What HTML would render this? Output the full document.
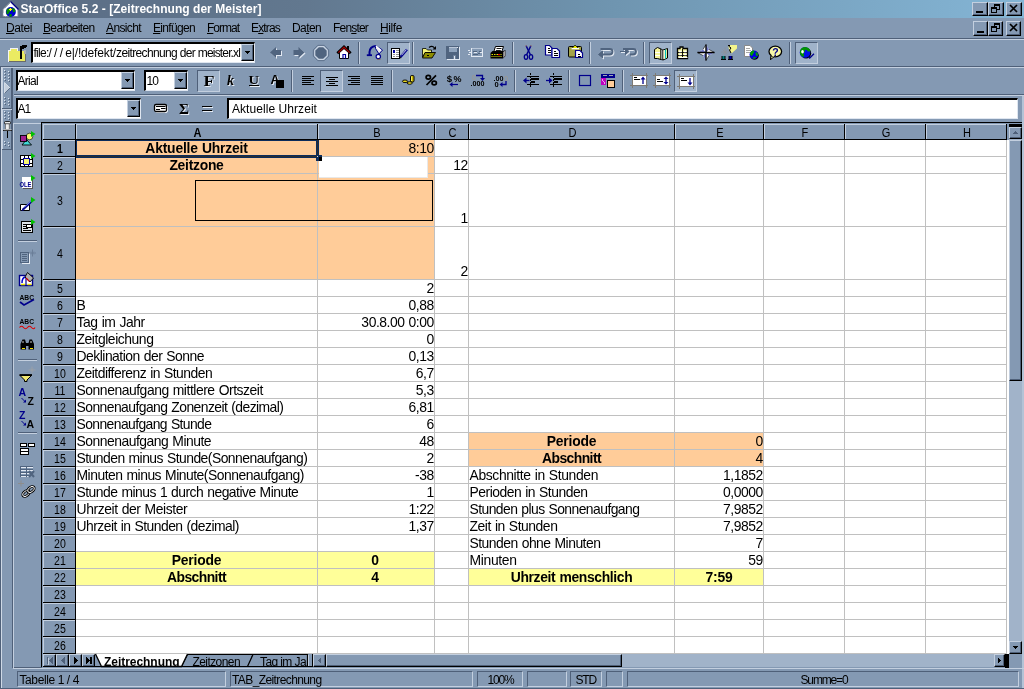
<!DOCTYPE html>
<html lang="de"><head><meta charset="utf-8"><title>StarOffice 5.2 - [Zeitrechnung der Meister]</title>
<style>
html,body{margin:0;padding:0}
body{width:1024px;height:689px;position:relative;overflow:hidden;background:#8499b3;font-family:"Liberation Sans",sans-serif;font-size:11px;color:#000}
div,span{position:absolute;box-sizing:border-box;white-space:nowrap}
svg{position:absolute;overflow:visible}
.t{font-size:12px;line-height:14px}
.c{font-size:13.9px;line-height:16px;height:16px;letter-spacing:-0.55px;word-spacing:0.6px}
.c.b{font-size:13.9px;letter-spacing:-0.25px}
.b{font-weight:bold}
.hl{background:#c3cfdf}.sh{background:#4f6079}.bk{background:#000}
.g{background:#c0c0c0}
.hc{font-size:12px;line-height:14px;text-align:center}
.inp{background:#fff;border-style:solid;border-width:2px 1px 1px 2px;border-color:#000 #dfe6f0 #dfe6f0 #000}
.btn{background:#8499b3;border:1px solid;border-color:#c3cfdf #000 #000 #c3cfdf}
u{text-decoration:underline}
.i{position:static}
</style></head>
<body>
<div id="app" style="left:0;top:0;width:1024px;height:689px;will-change:transform">
<div class="" style="left:0px;top:0px;width:1024px;height:18px;background:linear-gradient(90deg,#5a6c84 0%,#62788f 30%,#6f95b0 60%,#84b5d5 100%)"></div>
<span style="left:20.5px;top:2px;font-size:12px;line-height:14px;letter-spacing:0.038px;font-weight:bold;color:#fff;">StarOffice 5.2 - [Zeitrechnung der Meister]</span>
<span style="left:6px;top:21px;font-size:12px;line-height:14px;letter-spacing:-0.403px;"><u>D</u>atei</span>
<span style="left:43px;top:21px;font-size:12px;line-height:14px;letter-spacing:-0.654px;"><u>B</u>earbeiten</span>
<span style="left:106px;top:21px;font-size:12px;line-height:14px;letter-spacing:-0.622px;"><u>A</u>nsicht</span>
<span style="left:153px;top:21px;font-size:12px;line-height:14px;letter-spacing:-0.672px;"><u>E</u>inf&uuml;gen</span>
<span style="left:207px;top:21px;font-size:12px;line-height:14px;letter-spacing:-1.001px;"><u>F</u>ormat</span>
<span style="left:251px;top:21px;font-size:12px;line-height:14px;letter-spacing:-0.835px;">E<u>x</u>tras</span>
<span style="left:292px;top:21px;font-size:12px;line-height:14px;letter-spacing:-0.604px;">Da<u>t</u>en</span>
<span style="left:333px;top:21px;font-size:12px;line-height:14px;letter-spacing:-0.812px;">Fen<u>s</u>ter</span>
<span style="left:380px;top:21px;font-size:12px;line-height:14px;letter-spacing:-0.401px;"><u>H</u>ilfe</span>
<div class="sh" style="left:0px;top:38px;width:1024px;height:1px;"></div>
<div class="hl" style="left:0px;top:39px;width:1024px;height:1px;"></div>
<div class="sh" style="left:0px;top:66px;width:1024px;height:1px;"></div>
<div class="hl" style="left:0px;top:67px;width:1024px;height:1px;"></div>
<div class="sh" style="left:14px;top:94px;width:1010px;height:1px;"></div>
<div class="hl" style="left:14px;top:95px;width:1010px;height:1px;"></div>
<div class="btn" style="left:972px;top:2px;width:16px;height:14px;border-color:#c3cfdf #000 #000 #c3cfdf;box-shadow:inset -1px -1px 0 #4f6079"></div>
<div class="bk" style="left:976px;top:11px;width:7px;height:2px;"></div>
<div class="btn" style="left:988px;top:2px;width:16px;height:14px;border-color:#c3cfdf #000 #000 #c3cfdf;box-shadow:inset -1px -1px 0 #4f6079"></div>
<div class="" style="left:994px;top:4px;width:6px;height:6px;border:1px solid #000;border-top-width:2px"></div>
<div class="" style="left:991px;top:7px;width:6px;height:6px;border:1px solid #000;border-top-width:2px;background:#8499b3"></div>
<div class="btn" style="left:1006px;top:2px;width:16px;height:14px;border-color:#c3cfdf #000 #000 #c3cfdf;box-shadow:inset -1px -1px 0 #4f6079"></div>
<svg style="left:1009px;top:4px" width="10" height="9"><path d="M1 1 L8 8 M8 1 L1 8" stroke="#000" stroke-width="1.7" fill="none"/></svg>
<div class="btn" style="left:973px;top:21px;width:15px;height:15px;border-color:#c3cfdf #000 #000 #c3cfdf;box-shadow:inset -1px -1px 0 #4f6079"></div>
<div class="bk" style="left:977px;top:31px;width:7px;height:2px;"></div>
<div class="btn" style="left:988px;top:21px;width:15px;height:15px;border-color:#c3cfdf #000 #000 #c3cfdf;box-shadow:inset -1px -1px 0 #4f6079"></div>
<div class="" style="left:994px;top:23px;width:6px;height:6px;border:1px solid #000;border-top-width:2px"></div>
<div class="" style="left:991px;top:26px;width:6px;height:6px;border:1px solid #000;border-top-width:2px;background:#8499b3"></div>
<div class="btn" style="left:1006px;top:21px;width:15px;height:15px;border-color:#c3cfdf #000 #000 #c3cfdf;box-shadow:inset -1px -1px 0 #4f6079"></div>
<svg style="left:1009px;top:23px" width="10" height="9"><path d="M1 1 L8 8 M8 1 L1 8" stroke="#000" stroke-width="1.7" fill="none"/></svg>
<div class="inp" style="left:31px;top:42px;width:224px;height:21px;"></div>
<span style="left:33.5px;top:45.5px;font-size:12px;line-height:14px;white-space:pre"><span class="i" style="letter-spacing:-0.735px">file:</span><span class="i" style="letter-spacing:2.283px">///</span><span class="i" style="letter-spacing:-0.202px">e|/!</span><span class="i" style="letter-spacing:-0.146px">defekt/</span><span class="i" style="letter-spacing:-0.638px">zeitrechnung </span><span class="i" style="letter-spacing:-0.669px">der </span><span class="i" style="letter-spacing:-0.838px">meister.xl</span></span>
<div class="btn" style="left:241px;top:44px;width:13px;height:17px;box-shadow:inset -1px -1px 0 #4f6079"></div>
<div class="bk" style="left:245px;top:51px;width:5px;height:1px;"></div>
<div class="bk" style="left:246px;top:52px;width:3px;height:1px;"></div>
<div class="bk" style="left:247px;top:53px;width:1px;height:1px;"></div>
<div class="sh" style="left:358px;top:42px;width:1px;height:22px;"></div>
<div class="hl" style="left:359px;top:42px;width:1px;height:22px;"></div>
<div class="sh" style="left:412px;top:42px;width:1px;height:22px;"></div>
<div class="hl" style="left:413px;top:42px;width:1px;height:22px;"></div>
<div class="sh" style="left:512px;top:42px;width:1px;height:22px;"></div>
<div class="hl" style="left:513px;top:42px;width:1px;height:22px;"></div>
<div class="sh" style="left:589px;top:42px;width:1px;height:22px;"></div>
<div class="hl" style="left:590px;top:42px;width:1px;height:22px;"></div>
<div class="sh" style="left:643px;top:42px;width:1px;height:22px;"></div>
<div class="hl" style="left:644px;top:42px;width:1px;height:22px;"></div>
<div class="sh" style="left:789px;top:42px;width:1px;height:22px;"></div>
<div class="hl" style="left:790px;top:42px;width:1px;height:22px;"></div>
<div class="" style="left:387px;top:42px;width:23px;height:22px;background:#a0b3ca;border:1px solid;border-color:#4f6079 #c3cfdf #c3cfdf #4f6079"></div>
<div class="" style="left:649px;top:42px;width:23px;height:22px;background:#a0b3ca;border:1px solid;border-color:#4f6079 #c3cfdf #c3cfdf #4f6079"></div>
<div class="" style="left:795px;top:42px;width:23px;height:22px;background:#a0b3ca;border:1px solid;border-color:#4f6079 #c3cfdf #c3cfdf #4f6079"></div>
<div class="inp" style="left:16px;top:70px;width:119px;height:21px;"></div>
<span style="left:17.5px;top:73.5px;font-size:12px;line-height:14px;letter-spacing:-0.701px;">Arial</span>
<div class="btn" style="left:121px;top:72px;width:13px;height:17px;box-shadow:inset -1px -1px 0 #4f6079"></div>
<div class="bk" style="left:125px;top:79px;width:5px;height:1px;"></div>
<div class="bk" style="left:126px;top:80px;width:3px;height:1px;"></div>
<div class="bk" style="left:127px;top:81px;width:1px;height:1px;"></div>
<div class="inp" style="left:144px;top:70px;width:44px;height:21px;"></div>
<span style="left:146.5px;top:73.5px;font-size:12px;line-height:14px;letter-spacing:-0.924px;">10</span>
<div class="btn" style="left:174px;top:72px;width:13px;height:17px;box-shadow:inset -1px -1px 0 #4f6079"></div>
<div class="bk" style="left:178px;top:79px;width:5px;height:1px;"></div>
<div class="bk" style="left:179px;top:80px;width:3px;height:1px;"></div>
<div class="bk" style="left:180px;top:81px;width:1px;height:1px;"></div>
<div class="" style="left:197px;top:70px;width:23px;height:22px;background:#a0b3ca;border:1px solid;border-color:#4f6079 #c3cfdf #c3cfdf #4f6079"></div>
<div class="" style="left:320px;top:70px;width:23px;height:22px;background:#a0b3ca;border:1px solid;border-color:#4f6079 #c3cfdf #c3cfdf #4f6079"></div>
<div class="" style="left:674px;top:70px;width:23px;height:22px;background:#a0b3ca;border:1px solid;border-color:#4f6079 #c3cfdf #c3cfdf #4f6079"></div>
<div class="sh" style="left:291px;top:70px;width:1px;height:22px;"></div>
<div class="hl" style="left:292px;top:70px;width:1px;height:22px;"></div>
<div class="sh" style="left:391px;top:70px;width:1px;height:22px;"></div>
<div class="hl" style="left:392px;top:70px;width:1px;height:22px;"></div>
<div class="sh" style="left:514px;top:70px;width:1px;height:22px;"></div>
<div class="hl" style="left:515px;top:70px;width:1px;height:22px;"></div>
<div class="sh" style="left:568px;top:70px;width:1px;height:22px;"></div>
<div class="hl" style="left:569px;top:70px;width:1px;height:22px;"></div>
<div class="sh" style="left:622px;top:70px;width:1px;height:22px;"></div>
<div class="hl" style="left:623px;top:70px;width:1px;height:22px;"></div>
<div class="inp" style="left:16px;top:98px;width:125px;height:21px;"></div>
<span style="left:17.5px;top:101.5px;font-size:12px;line-height:14px;letter-spacing:-1.089px;">A1</span>
<div class="btn" style="left:127px;top:100px;width:13px;height:17px;box-shadow:inset -1px -1px 0 #4f6079"></div>
<div class="bk" style="left:131px;top:107px;width:5px;height:1px;"></div>
<div class="bk" style="left:132px;top:108px;width:3px;height:1px;"></div>
<div class="bk" style="left:133px;top:109px;width:1px;height:1px;"></div>
<div class="inp" style="left:227px;top:98px;width:791px;height:21px;"></div>
<span style="left:232px;top:102px;font-size:12px;line-height:14px;letter-spacing:0.060px;">Aktuelle Uhrzeit</span>
<div class="" style="left:76px;top:140px;width:933px;height:514px;background:#fff"></div>
<div class="" style="left:76px;top:140px;width:358px;height:139px;background:#ffcc99"></div>
<div class="" style="left:469px;top:433px;width:294px;height:33px;background:#ffcc99"></div>
<div class="" style="left:76px;top:552px;width:358px;height:33px;background:#ffff99"></div>
<div class="" style="left:469px;top:569px;width:294px;height:16px;background:#ffff99"></div>
<div class="g" style="left:317px;top:140px;width:1px;height:514px;"></div>
<div class="g" style="left:434px;top:140px;width:1px;height:514px;"></div>
<div class="g" style="left:468px;top:140px;width:1px;height:514px;"></div>
<div class="g" style="left:674px;top:140px;width:1px;height:514px;"></div>
<div class="g" style="left:763px;top:140px;width:1px;height:514px;"></div>
<div class="g" style="left:844px;top:140px;width:1px;height:514px;"></div>
<div class="g" style="left:925px;top:140px;width:1px;height:514px;"></div>
<div class="g" style="left:1006px;top:140px;width:1px;height:514px;"></div>
<div class="g" style="left:76px;top:156px;width:931px;height:1px;"></div>
<div class="g" style="left:76px;top:173px;width:931px;height:1px;"></div>
<div class="g" style="left:76px;top:226px;width:931px;height:1px;"></div>
<div class="g" style="left:76px;top:279px;width:931px;height:1px;"></div>
<div class="g" style="left:76px;top:296px;width:931px;height:1px;"></div>
<div class="g" style="left:76px;top:313px;width:931px;height:1px;"></div>
<div class="g" style="left:76px;top:330px;width:931px;height:1px;"></div>
<div class="g" style="left:76px;top:347px;width:931px;height:1px;"></div>
<div class="g" style="left:76px;top:364px;width:931px;height:1px;"></div>
<div class="g" style="left:76px;top:381px;width:931px;height:1px;"></div>
<div class="g" style="left:76px;top:398px;width:931px;height:1px;"></div>
<div class="g" style="left:76px;top:415px;width:931px;height:1px;"></div>
<div class="g" style="left:76px;top:432px;width:931px;height:1px;"></div>
<div class="g" style="left:76px;top:449px;width:931px;height:1px;"></div>
<div class="g" style="left:76px;top:466px;width:931px;height:1px;"></div>
<div class="g" style="left:76px;top:483px;width:931px;height:1px;"></div>
<div class="g" style="left:76px;top:500px;width:931px;height:1px;"></div>
<div class="g" style="left:76px;top:517px;width:931px;height:1px;"></div>
<div class="g" style="left:76px;top:534px;width:931px;height:1px;"></div>
<div class="g" style="left:76px;top:551px;width:931px;height:1px;"></div>
<div class="g" style="left:76px;top:568px;width:931px;height:1px;"></div>
<div class="g" style="left:76px;top:585px;width:931px;height:1px;"></div>
<div class="g" style="left:76px;top:602px;width:931px;height:1px;"></div>
<div class="g" style="left:76px;top:619px;width:931px;height:1px;"></div>
<div class="g" style="left:76px;top:636px;width:931px;height:1px;"></div>
<div class="g" style="left:76px;top:653px;width:931px;height:1px;"></div>
<div class="bk" style="left:41px;top:122px;width:981px;height:1px;"></div>
<div class="bk" style="left:41px;top:122px;width:1px;height:546px;"></div>
<div class="" style="left:43px;top:124px;width:964px;height:15px;background:#8499b3"></div>
<div class="bk" style="left:43px;top:139px;width:964px;height:1px;"></div>
<div class="" style="left:43px;top:140px;width:32px;height:514px;background:#8499b3"></div>
<div class="bk" style="left:75px;top:124px;width:1px;height:530px;"></div>
<div class="hc" style="left:43px;top:124px;width:32px;height:15px;border-top:1px solid #c3cfdf;border-left:1px solid #c3cfdf;"><span style="left:0px;width:32px;top:0px;text-align:center;transform:scaleX(1)"></span></div>
<div class="hc b" style="left:76px;top:124px;width:241px;height:15px;border-top:1px solid #c3cfdf;border-left:1px solid #c3cfdf;"><span style="left:0px;width:241px;top:1px;text-align:center;transform:scaleX(0.92)">A</span></div>
<div class="bk" style="left:317px;top:124px;width:1px;height:15px;"></div>
<div class="hc" style="left:318px;top:124px;width:116px;height:15px;border-top:1px solid #c3cfdf;border-left:1px solid #c3cfdf;"><span style="left:0px;width:116px;top:1px;text-align:center;transform:scaleX(0.92)">B</span></div>
<div class="bk" style="left:434px;top:124px;width:1px;height:15px;"></div>
<div class="hc" style="left:435px;top:124px;width:33px;height:15px;border-top:1px solid #c3cfdf;border-left:1px solid #c3cfdf;"><span style="left:0px;width:33px;top:1px;text-align:center;transform:scaleX(0.92)">C</span></div>
<div class="bk" style="left:468px;top:124px;width:1px;height:15px;"></div>
<div class="hc" style="left:469px;top:124px;width:205px;height:15px;border-top:1px solid #c3cfdf;border-left:1px solid #c3cfdf;"><span style="left:0px;width:205px;top:1px;text-align:center;transform:scaleX(0.92)">D</span></div>
<div class="bk" style="left:674px;top:124px;width:1px;height:15px;"></div>
<div class="hc" style="left:675px;top:124px;width:88px;height:15px;border-top:1px solid #c3cfdf;border-left:1px solid #c3cfdf;"><span style="left:0px;width:88px;top:1px;text-align:center;transform:scaleX(0.92)">E</span></div>
<div class="bk" style="left:763px;top:124px;width:1px;height:15px;"></div>
<div class="hc" style="left:764px;top:124px;width:80px;height:15px;border-top:1px solid #c3cfdf;border-left:1px solid #c3cfdf;"><span style="left:0px;width:80px;top:1px;text-align:center;transform:scaleX(0.92)">F</span></div>
<div class="bk" style="left:844px;top:124px;width:1px;height:15px;"></div>
<div class="hc" style="left:845px;top:124px;width:80px;height:15px;border-top:1px solid #c3cfdf;border-left:1px solid #c3cfdf;"><span style="left:0px;width:80px;top:1px;text-align:center;transform:scaleX(0.92)">G</span></div>
<div class="bk" style="left:925px;top:124px;width:1px;height:15px;"></div>
<div class="hc" style="left:926px;top:124px;width:80px;height:15px;border-top:1px solid #c3cfdf;border-left:1px solid #c3cfdf;"><span style="left:0px;width:80px;top:1px;text-align:center;transform:scaleX(0.92)">H</span></div>
<div class="bk" style="left:1006px;top:124px;width:1px;height:15px;"></div>
<div class="hc b" style="left:43px;top:140px;width:32px;height:16px;border-top:1px solid #c3cfdf;border-left:1px solid #c3cfdf;"><span style="left:0px;width:32px;top:0.5px;text-align:center;transform:scaleX(0.88)">1</span></div>
<div class="bk" style="left:43px;top:156px;width:32px;height:1px;"></div>
<div class="hc" style="left:43px;top:157px;width:32px;height:16px;border-top:1px solid #c3cfdf;border-left:1px solid #c3cfdf;"><span style="left:0px;width:32px;top:0.5px;text-align:center;transform:scaleX(0.88)">2</span></div>
<div class="bk" style="left:43px;top:173px;width:32px;height:1px;"></div>
<div class="hc" style="left:43px;top:174px;width:32px;height:52px;border-top:1px solid #c3cfdf;border-left:1px solid #c3cfdf;"><span style="left:0px;width:32px;top:18.5px;text-align:center;transform:scaleX(0.88)">3</span></div>
<div class="bk" style="left:43px;top:226px;width:32px;height:1px;"></div>
<div class="hc" style="left:43px;top:227px;width:32px;height:52px;border-top:1px solid #c3cfdf;border-left:1px solid #c3cfdf;"><span style="left:0px;width:32px;top:18.5px;text-align:center;transform:scaleX(0.88)">4</span></div>
<div class="bk" style="left:43px;top:279px;width:32px;height:1px;"></div>
<div class="hc" style="left:43px;top:280px;width:32px;height:16px;border-top:1px solid #c3cfdf;border-left:1px solid #c3cfdf;"><span style="left:0px;width:32px;top:0.5px;text-align:center;transform:scaleX(0.88)">5</span></div>
<div class="bk" style="left:43px;top:296px;width:32px;height:1px;"></div>
<div class="hc" style="left:43px;top:297px;width:32px;height:16px;border-top:1px solid #c3cfdf;border-left:1px solid #c3cfdf;"><span style="left:0px;width:32px;top:0.5px;text-align:center;transform:scaleX(0.88)">6</span></div>
<div class="bk" style="left:43px;top:313px;width:32px;height:1px;"></div>
<div class="hc" style="left:43px;top:314px;width:32px;height:16px;border-top:1px solid #c3cfdf;border-left:1px solid #c3cfdf;"><span style="left:0px;width:32px;top:0.5px;text-align:center;transform:scaleX(0.88)">7</span></div>
<div class="bk" style="left:43px;top:330px;width:32px;height:1px;"></div>
<div class="hc" style="left:43px;top:331px;width:32px;height:16px;border-top:1px solid #c3cfdf;border-left:1px solid #c3cfdf;"><span style="left:0px;width:32px;top:0.5px;text-align:center;transform:scaleX(0.88)">8</span></div>
<div class="bk" style="left:43px;top:347px;width:32px;height:1px;"></div>
<div class="hc" style="left:43px;top:348px;width:32px;height:16px;border-top:1px solid #c3cfdf;border-left:1px solid #c3cfdf;"><span style="left:0px;width:32px;top:0.5px;text-align:center;transform:scaleX(0.88)">9</span></div>
<div class="bk" style="left:43px;top:364px;width:32px;height:1px;"></div>
<div class="hc" style="left:43px;top:365px;width:32px;height:16px;border-top:1px solid #c3cfdf;border-left:1px solid #c3cfdf;"><span style="left:0px;width:32px;top:0.5px;text-align:center;transform:scaleX(0.88)">10</span></div>
<div class="bk" style="left:43px;top:381px;width:32px;height:1px;"></div>
<div class="hc" style="left:43px;top:382px;width:32px;height:16px;border-top:1px solid #c3cfdf;border-left:1px solid #c3cfdf;"><span style="left:0px;width:32px;top:0.5px;text-align:center;transform:scaleX(0.88)">11</span></div>
<div class="bk" style="left:43px;top:398px;width:32px;height:1px;"></div>
<div class="hc" style="left:43px;top:399px;width:32px;height:16px;border-top:1px solid #c3cfdf;border-left:1px solid #c3cfdf;"><span style="left:0px;width:32px;top:0.5px;text-align:center;transform:scaleX(0.88)">12</span></div>
<div class="bk" style="left:43px;top:415px;width:32px;height:1px;"></div>
<div class="hc" style="left:43px;top:416px;width:32px;height:16px;border-top:1px solid #c3cfdf;border-left:1px solid #c3cfdf;"><span style="left:0px;width:32px;top:0.5px;text-align:center;transform:scaleX(0.88)">13</span></div>
<div class="bk" style="left:43px;top:432px;width:32px;height:1px;"></div>
<div class="hc" style="left:43px;top:433px;width:32px;height:16px;border-top:1px solid #c3cfdf;border-left:1px solid #c3cfdf;"><span style="left:0px;width:32px;top:0.5px;text-align:center;transform:scaleX(0.88)">14</span></div>
<div class="bk" style="left:43px;top:449px;width:32px;height:1px;"></div>
<div class="hc" style="left:43px;top:450px;width:32px;height:16px;border-top:1px solid #c3cfdf;border-left:1px solid #c3cfdf;"><span style="left:0px;width:32px;top:0.5px;text-align:center;transform:scaleX(0.88)">15</span></div>
<div class="bk" style="left:43px;top:466px;width:32px;height:1px;"></div>
<div class="hc" style="left:43px;top:467px;width:32px;height:16px;border-top:1px solid #c3cfdf;border-left:1px solid #c3cfdf;"><span style="left:0px;width:32px;top:0.5px;text-align:center;transform:scaleX(0.88)">16</span></div>
<div class="bk" style="left:43px;top:483px;width:32px;height:1px;"></div>
<div class="hc" style="left:43px;top:484px;width:32px;height:16px;border-top:1px solid #c3cfdf;border-left:1px solid #c3cfdf;"><span style="left:0px;width:32px;top:0.5px;text-align:center;transform:scaleX(0.88)">17</span></div>
<div class="bk" style="left:43px;top:500px;width:32px;height:1px;"></div>
<div class="hc" style="left:43px;top:501px;width:32px;height:16px;border-top:1px solid #c3cfdf;border-left:1px solid #c3cfdf;"><span style="left:0px;width:32px;top:0.5px;text-align:center;transform:scaleX(0.88)">18</span></div>
<div class="bk" style="left:43px;top:517px;width:32px;height:1px;"></div>
<div class="hc" style="left:43px;top:518px;width:32px;height:16px;border-top:1px solid #c3cfdf;border-left:1px solid #c3cfdf;"><span style="left:0px;width:32px;top:0.5px;text-align:center;transform:scaleX(0.88)">19</span></div>
<div class="bk" style="left:43px;top:534px;width:32px;height:1px;"></div>
<div class="hc" style="left:43px;top:535px;width:32px;height:16px;border-top:1px solid #c3cfdf;border-left:1px solid #c3cfdf;"><span style="left:0px;width:32px;top:0.5px;text-align:center;transform:scaleX(0.88)">20</span></div>
<div class="bk" style="left:43px;top:551px;width:32px;height:1px;"></div>
<div class="hc" style="left:43px;top:552px;width:32px;height:16px;border-top:1px solid #c3cfdf;border-left:1px solid #c3cfdf;"><span style="left:0px;width:32px;top:0.5px;text-align:center;transform:scaleX(0.88)">21</span></div>
<div class="bk" style="left:43px;top:568px;width:32px;height:1px;"></div>
<div class="hc" style="left:43px;top:569px;width:32px;height:16px;border-top:1px solid #c3cfdf;border-left:1px solid #c3cfdf;"><span style="left:0px;width:32px;top:0.5px;text-align:center;transform:scaleX(0.88)">22</span></div>
<div class="bk" style="left:43px;top:585px;width:32px;height:1px;"></div>
<div class="hc" style="left:43px;top:586px;width:32px;height:16px;border-top:1px solid #c3cfdf;border-left:1px solid #c3cfdf;"><span style="left:0px;width:32px;top:0.5px;text-align:center;transform:scaleX(0.88)">23</span></div>
<div class="bk" style="left:43px;top:602px;width:32px;height:1px;"></div>
<div class="hc" style="left:43px;top:603px;width:32px;height:16px;border-top:1px solid #c3cfdf;border-left:1px solid #c3cfdf;"><span style="left:0px;width:32px;top:0.5px;text-align:center;transform:scaleX(0.88)">24</span></div>
<div class="bk" style="left:43px;top:619px;width:32px;height:1px;"></div>
<div class="hc" style="left:43px;top:620px;width:32px;height:16px;border-top:1px solid #c3cfdf;border-left:1px solid #c3cfdf;"><span style="left:0px;width:32px;top:0.5px;text-align:center;transform:scaleX(0.88)">25</span></div>
<div class="bk" style="left:43px;top:636px;width:32px;height:1px;"></div>
<div class="hc" style="left:43px;top:637px;width:32px;height:16px;border-top:1px solid #c3cfdf;border-left:1px solid #c3cfdf;"><span style="left:0px;width:32px;top:0.5px;text-align:center;transform:scaleX(0.88)">26</span></div>
<div class="bk" style="left:43px;top:653px;width:32px;height:1px;"></div>
<span class="c b" style="left:76px;top:140px;width:241px;text-align:center;letter-spacing:-0.203px">Aktuelle Uhrzeit</span>
<span class="c" style="left:318px;top:140px;width:116px;padding-right:0.2px;text-align:right;letter-spacing:-0.45px">8:10</span>
<span class="c b" style="left:76px;top:157px;width:241px;text-align:center;letter-spacing:-0.272px">Zeitzone</span>
<span class="c" style="left:435px;top:157px;width:33px;padding-right:0.2px;text-align:right;letter-spacing:-0.45px">12</span>
<span class="c" style="left:435px;top:210px;width:33px;padding-right:0.2px;text-align:right;letter-spacing:-0.45px">1</span>
<span class="c" style="left:435px;top:263px;width:33px;padding-right:0.2px;text-align:right;letter-spacing:-0.45px">2</span>
<span class="c" style="left:76px;top:297px;width:241px;padding-left:0.5px;text-align:left">B</span>
<span class="c" style="left:76px;top:314px;width:241px;padding-left:0.5px;text-align:left;letter-spacing:-0.431px">Tag im Jahr</span>
<span class="c" style="left:76px;top:331px;width:241px;padding-left:0.5px;text-align:left;letter-spacing:-0.437px">Zeitgleichung</span>
<span class="c" style="left:76px;top:348px;width:241px;padding-left:0.5px;text-align:left;letter-spacing:-0.499px">Deklination der Sonne</span>
<span class="c" style="left:76px;top:365px;width:241px;padding-left:0.5px;text-align:left;letter-spacing:-0.500px">Zeitdifferenz in Stunden</span>
<span class="c" style="left:76px;top:382px;width:241px;padding-left:0.5px;text-align:left;letter-spacing:-0.453px">Sonnenaufgang mittlere Ortszeit</span>
<span class="c" style="left:76px;top:399px;width:241px;padding-left:0.5px;text-align:left;letter-spacing:-0.554px">Sonnenaufgang Zonenzeit (dezimal)</span>
<span class="c" style="left:76px;top:416px;width:241px;padding-left:0.5px;text-align:left;letter-spacing:-0.584px">Sonnenaufgang Stunde</span>
<span class="c" style="left:76px;top:433px;width:241px;padding-left:0.5px;text-align:left;letter-spacing:-0.483px">Sonnenaufgang Minute</span>
<span class="c" style="left:76px;top:450px;width:241px;padding-left:0.5px;text-align:left;letter-spacing:-0.522px">Stunden minus Stunde(Sonnenaufgang)</span>
<span class="c" style="left:76px;top:467px;width:241px;padding-left:0.5px;text-align:left;letter-spacing:-0.489px">Minuten minus Minute(Sonnenaufgang)</span>
<span class="c" style="left:76px;top:484px;width:241px;padding-left:0.5px;text-align:left;letter-spacing:-0.509px">Stunde minus 1 durch negative Minute</span>
<span class="c" style="left:76px;top:501px;width:241px;padding-left:0.5px;text-align:left;letter-spacing:-0.406px">Uhrzeit der Meister</span>
<span class="c" style="left:76px;top:518px;width:241px;padding-left:0.5px;text-align:left;letter-spacing:-0.524px">Uhrzeit in Stunden (dezimal)</span>
<span class="c" style="left:318px;top:280px;width:116px;padding-right:0.2px;text-align:right;letter-spacing:-0.45px">2</span>
<span class="c" style="left:318px;top:297px;width:116px;padding-right:0.2px;text-align:right;letter-spacing:-0.45px">0,88</span>
<span class="c" style="left:318px;top:314px;width:116px;padding-right:0.2px;text-align:right;letter-spacing:-0.45px">30.8.00 0:00</span>
<span class="c" style="left:318px;top:331px;width:116px;padding-right:0.2px;text-align:right;letter-spacing:-0.45px">0</span>
<span class="c" style="left:318px;top:348px;width:116px;padding-right:0.2px;text-align:right;letter-spacing:-0.45px">0,13</span>
<span class="c" style="left:318px;top:365px;width:116px;padding-right:0.2px;text-align:right;letter-spacing:-0.45px">6,7</span>
<span class="c" style="left:318px;top:382px;width:116px;padding-right:0.2px;text-align:right;letter-spacing:-0.45px">5,3</span>
<span class="c" style="left:318px;top:399px;width:116px;padding-right:0.2px;text-align:right;letter-spacing:-0.45px">6,81</span>
<span class="c" style="left:318px;top:416px;width:116px;padding-right:0.2px;text-align:right;letter-spacing:-0.45px">6</span>
<span class="c" style="left:318px;top:433px;width:116px;padding-right:0.2px;text-align:right;letter-spacing:-0.45px">48</span>
<span class="c" style="left:318px;top:450px;width:116px;padding-right:0.2px;text-align:right;letter-spacing:-0.45px">2</span>
<span class="c" style="left:318px;top:467px;width:116px;padding-right:0.2px;text-align:right;letter-spacing:-0.45px">-38</span>
<span class="c" style="left:318px;top:484px;width:116px;padding-right:0.2px;text-align:right;letter-spacing:-0.45px">1</span>
<span class="c" style="left:318px;top:501px;width:116px;padding-right:0.2px;text-align:right;letter-spacing:-0.45px">1:22</span>
<span class="c" style="left:318px;top:518px;width:116px;padding-right:0.2px;text-align:right;letter-spacing:-0.45px">1,37</span>
<span class="c b" style="left:76px;top:552px;width:241px;text-align:center;letter-spacing:-0.198px">Periode</span>
<span class="c b" style="left:317px;top:552px;width:116px;text-align:center">0</span>
<span class="c b" style="left:76px;top:569px;width:241px;text-align:center;letter-spacing:-0.555px">Abschnitt</span>
<span class="c b" style="left:317px;top:569px;width:116px;text-align:center">4</span>
<span class="c b" style="left:469px;top:433px;width:205px;text-align:center;letter-spacing:-0.198px">Periode</span>
<span class="c" style="left:675px;top:433px;width:88px;padding-right:0.2px;text-align:right;letter-spacing:-0.45px">0</span>
<span class="c b" style="left:469px;top:450px;width:205px;text-align:center;letter-spacing:-0.555px">Abschnitt</span>
<span class="c" style="left:675px;top:450px;width:88px;padding-right:0.2px;text-align:right;letter-spacing:-0.45px">4</span>
<span class="c" style="left:469px;top:467px;width:205px;padding-left:0.5px;text-align:left;letter-spacing:-0.373px">Abschnitte in Stunden</span>
<span class="c" style="left:675px;top:467px;width:88px;padding-right:0.2px;text-align:right;letter-spacing:-0.45px">1,1852</span>
<span class="c" style="left:469px;top:484px;width:205px;padding-left:0.5px;text-align:left;letter-spacing:-0.483px">Perioden in Stunden</span>
<span class="c" style="left:675px;top:484px;width:88px;padding-right:0.2px;text-align:right;letter-spacing:-0.45px">0,0000</span>
<span class="c" style="left:469px;top:501px;width:205px;padding-left:0.5px;text-align:left;letter-spacing:-0.553px">Stunden plus Sonnenaufgang</span>
<span class="c" style="left:675px;top:501px;width:88px;padding-right:0.2px;text-align:right;letter-spacing:-0.45px">7,9852</span>
<span class="c" style="left:469px;top:518px;width:205px;padding-left:0.5px;text-align:left;letter-spacing:-0.447px">Zeit in Stunden</span>
<span class="c" style="left:675px;top:518px;width:88px;padding-right:0.2px;text-align:right;letter-spacing:-0.45px">7,9852</span>
<span class="c" style="left:469px;top:535px;width:205px;padding-left:0.5px;text-align:left;letter-spacing:-0.504px">Stunden ohne Minuten</span>
<span class="c" style="left:675px;top:535px;width:88px;padding-right:0.2px;text-align:right;letter-spacing:-0.45px">7</span>
<span class="c" style="left:469px;top:552px;width:205px;padding-left:0.5px;text-align:left;letter-spacing:-0.322px">Minuten</span>
<span class="c" style="left:675px;top:552px;width:88px;padding-right:0.2px;text-align:right;letter-spacing:-0.45px">59</span>
<span class="c b" style="left:469px;top:569px;width:205px;text-align:center;letter-spacing:-0.358px">Uhrzeit menschlich</span>
<span class="c b" style="left:675px;top:569px;width:88px;text-align:center">7:59</span>
<div class="" style="left:319px;top:157px;width:109px;height:21px;background:#fff;border-bottom:1px solid #e8e8e8;border-right:1px solid #e8e8e8"></div>
<div class="" style="left:195px;top:180px;width:238px;height:41px;border:1px solid #000"></div>
<div class="" style="left:76px;top:140px;width:243px;height:1px;background:#0c2c5c"></div>
<div class="" style="left:76px;top:140px;width:1px;height:18px;background:#0c2c5c"></div>
<div class="" style="left:316px;top:140px;width:3px;height:21px;background:#0c2c5c"></div>
<div class="" style="left:317px;top:140px;width:1px;height:17px;background:#2c2c2c"></div>
<div class="" style="left:76px;top:155px;width:243px;height:3px;background:#0c2c5c"></div>
<div class="" style="left:77px;top:156px;width:240px;height:1px;background:#2c2c2c"></div>
<div class="" style="left:319px;top:155px;width:3px;height:2px;background:#0c2c5c"></div>
<div class="bk" style="left:319px;top:157px;width:3px;height:4px;"></div>
<div class="" style="left:317px;top:156px;width:1px;height:1px;background:#e8e8e8"></div>
<div class="" style="left:1009px;top:124px;width:13px;height:530px;background:#a1b3c9"></div>
<div class="bk" style="left:1009px;top:124px;width:13px;height:3px;"></div>
<div class="btn" style="left:1009px;top:127px;width:13px;height:12px;box-shadow:inset -1px -1px 0 #4f6079"></div>
<div class="sh" style="left:1015px;top:131px;width:1px;height:1px;"></div>
<div class="sh" style="left:1014px;top:132px;width:3px;height:1px;"></div>
<div class="sh" style="left:1013px;top:133px;width:5px;height:1px;"></div>
<div class="btn" style="left:1009px;top:140px;width:13px;height:241px;box-shadow:inset -1px -1px 0 #4f6079"></div>
<div class="btn" style="left:1009px;top:641px;width:13px;height:13px;box-shadow:inset -1px -1px 0 #4f6079"></div>
<div class="bk" style="left:1013px;top:646px;width:5px;height:1px;"></div>
<div class="bk" style="left:1014px;top:647px;width:3px;height:1px;"></div>
<div class="bk" style="left:1015px;top:648px;width:1px;height:1px;"></div>
<div class="" style="left:1022px;top:96px;width:2px;height:593px;background:#b4c3d6"></div>
<div class="" style="left:43px;top:654px;width:966px;height:13px;background:#8499b3"></div>
<div class="btn" style="left:43px;top:654px;width:13px;height:13px;box-shadow:inset -1px -1px 0 #4f6079"></div>
<div class="btn" style="left:56px;top:654px;width:13px;height:13px;box-shadow:inset -1px -1px 0 #4f6079"></div>
<div class="btn" style="left:69px;top:654px;width:13px;height:13px;box-shadow:inset -1px -1px 0 #4f6079"></div>
<div class="btn" style="left:82px;top:654px;width:13px;height:13px;box-shadow:inset -1px -1px 0 #4f6079"></div>
<div class="sh" style="left:47px;top:657px;width:1px;height:7px;"></div>
<div class="hl" style="left:48px;top:658px;width:1px;height:7px;"></div>
<div class="sh" style="left:49px;top:660px;width:1px;height:1px;"></div>
<div class="sh" style="left:50px;top:659px;width:1px;height:3px;"></div>
<div class="sh" style="left:51px;top:658px;width:1px;height:5px;"></div>
<div class="sh" style="left:52px;top:657px;width:1px;height:7px;"></div>
<div class="sh" style="left:61px;top:660px;width:1px;height:1px;"></div>
<div class="sh" style="left:62px;top:659px;width:1px;height:3px;"></div>
<div class="sh" style="left:63px;top:658px;width:1px;height:5px;"></div>
<div class="sh" style="left:64px;top:657px;width:1px;height:7px;"></div>
<div class="bk" style="left:74px;top:657px;width:1px;height:7px;"></div>
<div class="bk" style="left:75px;top:658px;width:1px;height:5px;"></div>
<div class="bk" style="left:76px;top:659px;width:1px;height:3px;"></div>
<div class="bk" style="left:77px;top:660px;width:1px;height:1px;"></div>
<div class="bk" style="left:86px;top:657px;width:1px;height:7px;"></div>
<div class="bk" style="left:87px;top:658px;width:1px;height:5px;"></div>
<div class="bk" style="left:88px;top:659px;width:1px;height:3px;"></div>
<div class="bk" style="left:89px;top:660px;width:1px;height:1px;"></div>
<div class="bk" style="left:90px;top:657px;width:2px;height:7px;"></div>
<svg style="left:0;top:0" width="1024" height="689"><path d="M187.5 654.5 L181.5 666.5 H248.5 L253 654.5Z" fill="#8499b3" stroke="#000" stroke-width="1.2"/><path d="M253 654.5 L247.5 666.5 H307.5 V654.5Z" fill="#8499b3" stroke="#000" stroke-width="1.2"/><path d="M95.5 654 L101.5 666.5 H181.5 L187.5 654" fill="#fff" stroke="#000" stroke-width="1.3"/></svg>
<div class="" style="left:100px;top:654px;width:84px;height:13px;overflow:hidden"><span style="left:4px;top:1px;font-size:12px;line-height:14px;letter-spacing:-0.042px;font-weight:bold;">Zeitrechnung</span></div>
<div class="" style="left:186px;top:654px;width:64px;height:13px;overflow:hidden"><span style="left:6.5px;top:1px;font-size:12px;line-height:14px;letter-spacing:-0.578px;">Zeitzonen</span></div>
<div class="" style="left:252px;top:654px;width:55px;height:13px;overflow:hidden"><span style="left:8px;top:1px;font-size:12px;line-height:14px;letter-spacing:-0.595px;">Tag im Ja</span></div>
<div class="bk" style="left:307px;top:654px;width:1px;height:13px;"></div>
<div class="" style="left:308px;top:654px;width:5px;height:13px;background:#8499b3"></div>
<div class="hl" style="left:308px;top:655px;width:1px;height:11px;"></div>
<div class="bk" style="left:312px;top:654px;width:1px;height:13px;"></div>
<div class="" style="left:313px;top:654px;width:696px;height:13px;background:#a1b3c9"></div>
<div class="btn" style="left:313px;top:654px;width:13px;height:13px;box-shadow:inset -1px -1px 0 #4f6079"></div>
<div class="sh" style="left:318px;top:660px;width:1px;height:1px;"></div>
<div class="sh" style="left:319px;top:659px;width:1px;height:3px;"></div>
<div class="sh" style="left:320px;top:658px;width:1px;height:5px;"></div>
<div class="btn" style="left:326px;top:654px;width:296px;height:13px;box-shadow:inset -1px -1px 0 #4f6079"></div>
<div class="btn" style="left:994px;top:654px;width:11px;height:13px;box-shadow:inset -1px -1px 0 #4f6079"></div>
<div class="bk" style="left:998px;top:658px;width:1px;height:5px;"></div>
<div class="bk" style="left:999px;top:659px;width:1px;height:3px;"></div>
<div class="bk" style="left:1000px;top:660px;width:1px;height:1px;"></div>
<div class="bk" style="left:1005px;top:654px;width:4px;height:14px;"></div>
<div class="bk" style="left:43px;top:666px;width:270px;height:1px;"></div>
<div class="sh" style="left:13px;top:667px;width:29px;height:1px;"></div>
<div class="hl" style="left:13px;top:123px;width:28px;height:1px;"></div>
<div class="hl" style="left:13px;top:668px;width:1011px;height:1px;"></div>
<div class="" style="left:17px;top:671px;width:209px;height:16px;border:1px solid;border-color:#4f6079 #c3cfdf #c3cfdf #4f6079"></div>
<span style="left:19.5px;top:673px;font-size:12px;line-height:14px;letter-spacing:-0.401px;">Tabelle 1 / 4</span>
<div class="" style="left:230px;top:671px;width:243px;height:16px;border:1px solid;border-color:#4f6079 #c3cfdf #c3cfdf #4f6079"></div>
<span style="left:232px;top:673px;font-size:12px;line-height:14px;letter-spacing:-0.604px;">TAB_Zeitrechnung</span>
<div class="" style="left:477px;top:671px;width:46px;height:16px;border:1px solid;border-color:#4f6079 #c3cfdf #c3cfdf #4f6079"></div>
<span style="left:487.5px;top:673px;font-size:12px;line-height:14px;letter-spacing:-1.173px;">100%</span>
<div class="" style="left:527px;top:671px;width:40px;height:16px;border:1px solid;border-color:#4f6079 #c3cfdf #c3cfdf #4f6079"></div>
<div class="" style="left:570px;top:671px;width:32px;height:16px;border:1px solid;border-color:#4f6079 #c3cfdf #c3cfdf #4f6079"></div>
<span style="left:575.5px;top:673px;font-size:12px;line-height:14px;letter-spacing:-1.167px;">STD</span>
<div class="" style="left:606px;top:671px;width:17px;height:16px;border:1px solid;border-color:#4f6079 #c3cfdf #c3cfdf #4f6079"></div>
<div class="" style="left:627px;top:671px;width:392px;height:16px;border:1px solid;border-color:#4f6079 #c3cfdf #c3cfdf #4f6079"></div>
<span style="left:800.5px;top:673px;font-size:12px;line-height:14px;letter-spacing:-1.146px;">Summe=0</span>
<div class="sh" style="left:0px;top:67px;width:1px;height:622px;"></div>
<div class="" style="left:1px;top:67px;width:1px;height:621px;background:#cfd9e6"></div>
<div class="sh" style="left:0px;top:688px;width:1024px;height:1px;"></div>
<div class="sh" style="left:12px;top:68px;width:1px;height:600px;"></div>
<div class="hl" style="left:13px;top:124px;width:1px;height:544px;"></div>
<div class="sh" style="left:11px;top:68px;width:1px;height:82px;"></div>
<div class="" style="left:2px;top:68px;width:1px;height:82px;background:#c5d0e0"></div>
<div class="sh" style="left:2px;top:149px;width:10px;height:1px;"></div>
<div class="sh" style="left:2px;top:108px;width:10px;height:1px;"></div>
<div class="" style="left:2px;top:109px;width:10px;height:1px;background:#c5d0e0"></div>
<div class="" style="left:4px;top:70px;width:1px;height:1px;background:#dfe6f0"></div>
<div class="sh" style="left:5px;top:71px;width:1px;height:1px;"></div>
<div class="" style="left:8px;top:71px;width:1px;height:1px;background:#dfe6f0"></div>
<div class="sh" style="left:9px;top:72px;width:1px;height:1px;"></div>
<div class="" style="left:4px;top:73px;width:1px;height:1px;background:#dfe6f0"></div>
<div class="sh" style="left:5px;top:74px;width:1px;height:1px;"></div>
<div class="" style="left:8px;top:74px;width:1px;height:1px;background:#dfe6f0"></div>
<div class="sh" style="left:9px;top:75px;width:1px;height:1px;"></div>
<div class="" style="left:4px;top:76px;width:1px;height:1px;background:#dfe6f0"></div>
<div class="sh" style="left:5px;top:77px;width:1px;height:1px;"></div>
<div class="" style="left:8px;top:77px;width:1px;height:1px;background:#dfe6f0"></div>
<div class="sh" style="left:9px;top:78px;width:1px;height:1px;"></div>
<div class="" style="left:4px;top:79px;width:1px;height:1px;background:#dfe6f0"></div>
<div class="sh" style="left:5px;top:80px;width:1px;height:1px;"></div>
<div class="" style="left:8px;top:80px;width:1px;height:1px;background:#dfe6f0"></div>
<div class="sh" style="left:9px;top:81px;width:1px;height:1px;"></div>
<div class="" style="left:4px;top:97px;width:1px;height:1px;background:#dfe6f0"></div>
<div class="sh" style="left:5px;top:98px;width:1px;height:1px;"></div>
<div class="" style="left:8px;top:98px;width:1px;height:1px;background:#dfe6f0"></div>
<div class="sh" style="left:9px;top:99px;width:1px;height:1px;"></div>
<div class="" style="left:4px;top:100px;width:1px;height:1px;background:#dfe6f0"></div>
<div class="sh" style="left:5px;top:101px;width:1px;height:1px;"></div>
<div class="" style="left:8px;top:101px;width:1px;height:1px;background:#dfe6f0"></div>
<div class="sh" style="left:9px;top:102px;width:1px;height:1px;"></div>
<div class="" style="left:4px;top:103px;width:1px;height:1px;background:#dfe6f0"></div>
<div class="sh" style="left:5px;top:104px;width:1px;height:1px;"></div>
<div class="" style="left:8px;top:104px;width:1px;height:1px;background:#dfe6f0"></div>
<div class="sh" style="left:9px;top:105px;width:1px;height:1px;"></div>
<div class="" style="left:4px;top:111px;width:1px;height:1px;background:#dfe6f0"></div>
<div class="sh" style="left:5px;top:112px;width:1px;height:1px;"></div>
<div class="" style="left:8px;top:112px;width:1px;height:1px;background:#dfe6f0"></div>
<div class="sh" style="left:9px;top:113px;width:1px;height:1px;"></div>
<div class="" style="left:4px;top:114px;width:1px;height:1px;background:#dfe6f0"></div>
<div class="sh" style="left:5px;top:115px;width:1px;height:1px;"></div>
<div class="" style="left:8px;top:115px;width:1px;height:1px;background:#dfe6f0"></div>
<div class="sh" style="left:9px;top:116px;width:1px;height:1px;"></div>
<div class="" style="left:4px;top:117px;width:1px;height:1px;background:#dfe6f0"></div>
<div class="sh" style="left:5px;top:118px;width:1px;height:1px;"></div>
<div class="" style="left:8px;top:118px;width:1px;height:1px;background:#dfe6f0"></div>
<div class="sh" style="left:9px;top:119px;width:1px;height:1px;"></div>
<div class="" style="left:4px;top:141px;width:1px;height:1px;background:#dfe6f0"></div>
<div class="sh" style="left:5px;top:142px;width:1px;height:1px;"></div>
<div class="" style="left:8px;top:142px;width:1px;height:1px;background:#dfe6f0"></div>
<div class="sh" style="left:9px;top:143px;width:1px;height:1px;"></div>
<div class="" style="left:4px;top:144px;width:1px;height:1px;background:#dfe6f0"></div>
<div class="sh" style="left:5px;top:145px;width:1px;height:1px;"></div>
<div class="" style="left:8px;top:145px;width:1px;height:1px;background:#dfe6f0"></div>
<div class="sh" style="left:9px;top:146px;width:1px;height:1px;"></div>
<div class="sh" style="left:18px;top:240px;width:19px;height:1px;"></div>
<div class="hl" style="left:18px;top:241px;width:19px;height:1px;"></div>
<div class="sh" style="left:18px;top:359px;width:19px;height:1px;"></div>
<div class="hl" style="left:18px;top:360px;width:19px;height:1px;"></div>
<div class="sh" style="left:18px;top:432px;width:19px;height:1px;"></div>
<div class="hl" style="left:18px;top:433px;width:19px;height:1px;"></div>
<svg style="left:0;top:0" width="1024" height="689" viewBox="0 0 1024 689">
<g><path d="M10.5 1.5 L18 9 V16.5 H3 V9 Z" fill="#fff" stroke="#7a8696" stroke-width="1"/><path d="M10.5 1.5 L18.5 9.5" stroke="#000080" stroke-width="1.3" fill="none"/><path d="M10.5 2.5 L4.5 8.5" stroke="#9aa4b2" stroke-width="1" fill="none"/><circle cx="10.8" cy="12" r="5" fill="#0000d0"/><path d="M6.5 10 q2 -3 4 -1 q1 2 -1 3 q-1 3 -3 2z M12 8 q3 0 3.500 3 q-1 2 -2.500 1z M9 15 q2 -2 3 0 q0 2 -2 2z" fill="#008c00"/><path d="M9 9.500h3M10.5 8v3" stroke="#ffff00" stroke-width="1.200"/><path d="M3.500 13.5 L6 16 " stroke="#fff" stroke-width="1.500"/></g>
<g shape-rendering="crispEdges"><path d="M9 51 h2 v-2 h6 v2 h8 v10 h-16z" fill="#ebeb62"/><path d="M8.500 61.500 V50.500 H10.500 V48.500 H17.500 V50.500" fill="none" stroke="#f4f4f4"/><path d="M9 61.500 H25.500 V51" fill="none" stroke="#6a6a6a"/><rect x="20" y="46" width="2" height="13" fill="#000"/><path d="M22 45 h5 v2 h-1 v1 h-2 v1 h-2z" fill="#000"/><rect x="24" y="50" width="2" height="4" fill="#b0b0b0"/></g>
<path d="M271 53.500 l6 -5.500 v3 h5 v5 h-5 v3z" fill="#e3e9f2"/><path d="M270 52.500 l6 -5.500 v3 h5 v5 h-5 v3z" fill="#50647f"/>
<path d="M305.5 53.500 l-6 -5.500 v3 h-5 v5 h5 v3z" fill="#e3e9f2"/><path d="M304.5 52.500 l-6 -5.500 v3 h-5 v5 h5 v3z" fill="#50647f"/>
<polygon points="328.67,56.18 324.18,60.67 317.82,60.67 313.33,56.18 313.33,49.82 317.82,45.33 324.18,45.33 328.67,49.82" fill="#8499b3" stroke="#5f728c" stroke-width="1"/>
<polygon points="327.28,55.60 323.60,59.28 318.40,59.28 314.72,55.60 314.72,50.40 318.40,46.72 323.60,46.72 327.28,50.40" fill="#50647f" stroke="#cbd6e4" stroke-width="1.200"/>
<g><rect x="347" y="46" width="2" height="5" fill="#000" shape-rendering="crispEdges"/><path d="M339.500 52.500 V58.500 H348.500 V52.500 L344 48.500Z" fill="#fff" stroke="#000"/><path d="M337.300 53.300 L344 46.800 L350.700 53.300" fill="none" stroke="#000" stroke-width="2.600"/><path d="M338.300 52.600 L344 47.200 L349.700 52.600" fill="none" stroke="#a00000" stroke-width="1.300"/><path d="M343 58.500 V54.500 H345.500 V58.500" fill="none" stroke="#0000a0" stroke-width="1.200"/></g>
<g fill="none"><path d="M369.500 55 V52 Q370 46.500 375.500 46" stroke="#00008c" stroke-width="2"/><path d="M366.800 55.200 H372" stroke="#00008c" stroke-width="1.800"/><path d="M375.500 45.500 L382.500 50 L379 54 L375.500 48.500Z" fill="#e8e8e8" stroke="#00008c" stroke-width="1"/><path d="M376 46 L381 50.500" stroke="#fff" stroke-width="1.500"/><circle cx="378.300" cy="56.500" r="2.200" fill="#fff" stroke="#00008c" stroke-width="1.200"/><path d="M377 59.300 h3.500" stroke="#806040" stroke-width="0.800"/></g>
<g><rect x="391.500" y="48.500" width="8" height="10" fill="#fff" stroke="#000"/><rect x="393" y="50" width="2" height="3" fill="#0000a0"/><path d="M396 50.500h3M396 52.500h3M393 54.500h2M396 54.500h3M393 56.500h2M396 56.500h3" stroke="#909090" stroke-width="1"/><path d="M400.500 57 L407 49.500" stroke="#00008c" stroke-width="2.400"/><path d="M401.500 55.200 L406.500 49.600" stroke="#fff" stroke-width="0.800"/><path d="M399.500 58.500 l2 -0.500 l-1.500 -1.500z" fill="#000"/></g>
<g><path d="M422.500 57 V48.500 H426 L427.500 50 H431.500 V52.500 H425.500Z" fill="#f2f27a" stroke="#000" stroke-width="0.800"/><path d="M425 52.500 H435.500 L432 58 H422.500Z" fill="#8c8c00" stroke="#000" stroke-width="0.900"/><path d="M429 47.500 Q432 45 434.500 48" fill="none" stroke="#000" stroke-width="1.100"/><path d="M436 46 v3.500 h-3.500z" fill="#000"/><path d="M427 55.500h2" stroke="#000"/></g>
<g shape-rendering="crispEdges"><rect x="447" y="47" width="13" height="13" fill="#e3e9f2"/><rect x="446" y="46" width="13" height="13" fill="#50647f"/><rect x="449" y="47" width="8" height="5" fill="#8fa3bc"/><rect x="449" y="47" width="8" height="1" fill="#b9c6d8"/><rect x="453" y="55" width="3" height="4" fill="#6f829c"/><rect x="454" y="56" width="1" height="3" fill="#e3e9f2"/><rect x="457" y="47" width="1" height="1" fill="#e3e9f2"/></g>
<g shape-rendering="crispEdges" fill="none"><rect x="471.500" y="48.500" width="11" height="8" stroke="#e3e9f2"/><path d="M471.500 48.500 H482.500" stroke="#b8c6d8"/><path d="M473 51.500 h4 M473 54.500 h5 M479 51.500 h2 M478 53.500h2" stroke="#50647f"/><path d="M474 52.500 h3 M480 52.500 h2" stroke="#e3e9f2"/><path d="M468 50.500h2M469 52.500h2M468 54.500h2" stroke="#e3e9f2"/></g>
<g><path d="M495.500 46.500 H503.500 L501.500 52.500 H493.500Z" fill="#fff" stroke="#000"/><path d="M496.500 48.500h5M495.800 50.500h5" stroke="#000" stroke-width="0.900"/><path d="M490.500 53 L492.500 51 H503 L505.500 50 V56 L503 58.500 H490.500Z" fill="#000"/><path d="M503.200 52 L505.300 50.500 V55.500 L503.200 58Z" fill="#a0a0a0"/><path d="M491.500 54.500 H502" stroke="#e0e000" stroke-width="1" stroke-dasharray="1.500 1"/><path d="M491.500 56.500 H502" stroke="#e0e000" stroke-width="1" stroke-dasharray="1 1"/><rect x="498" y="54" width="2" height="1.200" fill="#e00000"/></g>
<g fill="none" stroke="#00008c"><path d="M526 45.500 L530.500 55" stroke-width="1.500"/><path d="M531 45.500 L526.500 55" stroke-width="1.500"/><ellipse cx="526" cy="57" rx="1.700" ry="2.300" stroke-width="1.300"/><ellipse cx="531" cy="57" rx="1.700" ry="2.300" stroke-width="1.300"/><path d="M526 45 v1.500 M531 45 v1.500" stroke="#b09070" stroke-width="1"/></g>
<path d="M545.5 45.5 H549.5 L552 48 V55 H545.5Z" fill="#fff" stroke="#00008c" stroke-width="1.200"/><rect x="547.5" y="47.5" width="2" height="1" fill="#000" shape-rendering="crispEdges"/><rect x="547.5" y="49.5" width="3" height="1" fill="#000" shape-rendering="crispEdges"/><rect x="547.5" y="51.5" width="3" height="1" fill="#000" shape-rendering="crispEdges"/>
<path d="M552 48.5 H557 L559.5 51 V57.5 H552Z" fill="#fff" stroke="#00008c" stroke-width="1.200"/><rect x="554" y="50.5" width="2" height="1" fill="#000" shape-rendering="crispEdges"/><rect x="554" y="52.5" width="4" height="1" fill="#000" shape-rendering="crispEdges"/><rect x="554" y="54.5" width="4" height="1" fill="#000" shape-rendering="crispEdges"/>
<g><rect x="568.500" y="46.500" width="13" height="10.500" rx="1" fill="#a4a448" stroke="#000"/><path d="M572 48.500 L575 45 L578.500 48.500Z" fill="#f0f000" stroke="#000" stroke-width="0.700"/><rect x="571.500" y="48" width="7.500" height="1.300" fill="#fff"/></g>
<path d="M575.5 50.5 H580 L582.5 53 V57.5 H575.5Z" fill="#fff" stroke="#00008c" stroke-width="1.200"/><rect x="577.5" y="53.5" width="2" height="1" fill="#000" shape-rendering="crispEdges"/><rect x="577.5" y="55.5" width="3" height="1" fill="#000" shape-rendering="crispEdges"/>
<g transform="translate(1,1)"><path d="M600.5 49 H609.5 Q612.5 49 612.5 51.500 Q612.5 54.500 609.5 54.500 H602.5" fill="none" stroke="#e3e9f2" stroke-width="1.800"/><path d="M598.5 54.500 l4 -3.500 v7z" fill="#e3e9f2" stroke="#e3e9f2"/></g><path d="M600.5 49 H609.5 Q612.5 49 612.5 51.500 Q612.5 54.500 609.5 54.500 H602.5" fill="none" stroke="#50647f" stroke-width="1.800"/><path d="M598.5 54.500 l4 -3.500 v7z" fill="#50647f" stroke="#50647f" stroke-width="1"/>
<g transform="translate(1,1)"><path d="M623 49 H633 Q636 49 636 51.500 Q636 54.500 633 54.500 H630" fill="none" stroke="#e3e9f2" stroke-width="1.800"/><path d="M629 51.500 l-3.500 -3 v6z M626 51.500 h-6" fill="#e3e9f2" stroke="#e3e9f2"/></g><path d="M623 49 H633 Q636 49 636 51.500 Q636 54.500 633 54.500 H630" fill="none" stroke="#50647f" stroke-width="1.800"/><path d="M629 51.500 l-3.500 -3 v6z M626 51.500 h-6" fill="#50647f" stroke="#50647f" stroke-width="1"/>
<g><path d="M654.500 49.500 L657.500 47.500 L661 49 V59.500 L657.500 58.500 H654.500Z" fill="#f4f49a" stroke="#000"/><path d="M661 49 L663 50 V60 L661 59.500Z" fill="#fff" stroke="#000" stroke-width="0.800"/><path d="M663 50 L667.500 48.500 V58 L663 60Z" fill="#f4f49a" stroke="#000"/><path d="M665.500 49.500 V58.500" stroke="#00c0c0" stroke-width="1.200"/><path d="M664 50 V59" stroke="#fff" stroke-width="0.900"/><path d="M655 52.500h5M655 55.500h5" stroke="#fff" stroke-width="1"/></g>
<g><path d="M677.500 48.500 H680 V47 H683 V48.500 H687.500 V58.500 H677.500Z" fill="#f6f6a0" stroke="#000" stroke-width="1.300"/><path d="M682.500 49 V58 M678 52.500 H687 M678 55.500 H687" stroke="#000" stroke-width="0.900"/><path d="M679 51.500h2.500M684 51.500h2.500M679 54.500h2.500M684 54.500h2.500" stroke="#fff" stroke-width="1.500"/><path d="M678.500 57.500h9" stroke="#fff" stroke-width="1"/></g>
<g><path d="M706 44.500 L709 49.500 L714.500 52.500 L709 55.500 L706 60.500 L703 55.500 L697.500 52.500 L703 49.500Z" fill="#fff"/><path d="M706 52.500 L709 49.500 L706 44.500Z M706 52.500 L703 55.500 L706 60.500Z M706 52.500 L703 49.500 L697.500 52.500Z M706 52.500 L709 55.500 L714.500 52.500Z" fill="#7078c8"/><path d="M706 44.500 V60.500 M697.500 52.500 H714.500" stroke="#000" stroke-width="1.400"/><path d="M706 44.500 L703 49.500 M706 60.500 L709 55.500 M697.500 52.500 L703 55.500 M714.500 52.500 L709 49.500" stroke="#000" stroke-width="0.600"/></g>
<g><path d="M725 47.500 V56.500 M721 52 H729 M722.500 49.500 L727.500 54.500 M727.500 49.500 L722.500 54.500" stroke="#8d939c" stroke-width="0.900"/><path d="M728 45 H737 V48.500 L731.500 53.500 L729.500 51Z" fill="#f4f48c"/><path d="M728.500 46 L731 48 L729.500 50 L731 53" fill="none" stroke="#000" stroke-width="1"/><path d="M728 45.500h2" stroke="#000"/><rect x="722" y="56" width="3" height="3" fill="#008080"/><path d="M721 59.500h5M722 56v3M725 56v3" stroke="#000" stroke-width="1"/><rect x="729" y="56" width="3" height="3" fill="#0000a0"/><path d="M728 59.500h5M729 56v3M732 56v3" stroke="#000" stroke-width="1"/></g>
<g><path d="M744.500 45.500 H750 L752.500 48 V56.500 H744.500Z" fill="#fff" stroke="#8a8a8a"/><path d="M746 48.500h4M746 50.500h5M746 52.500h4" stroke="#a8a8a8" stroke-width="1"/><circle cx="754.500" cy="55.500" r="4.300" fill="#000"/><circle cx="753.800" cy="54.800" r="4.300" fill="#0000e0"/><path d="M750 53 q1.500 -3 4 -2.500 q1 1.500 -0.500 2.500 q-0.500 2 -2 3 q-1.500 -0.500 -1.500 -3z M755.500 52 q2.500 0.500 2.500 3 q-1 1.500 -2 0.500z M753 57.500 q2 -1.500 3 0 q-1 1.500 -3 1z" fill="#00a000"/></g>
<g><path d="M770.500 60 L771.500 55.500" stroke="#000" stroke-width="1"/><ellipse cx="775.300" cy="51.500" rx="6.300" ry="5.300" fill="#f8f8a8" stroke="#000" stroke-width="1.300"/><path d="M771 56 L770.500 59.500 L774.500 56.500Z" fill="#f8f8a8" stroke="#000" stroke-width="1"/><path d="M771.800 55.300 L774.200 56" stroke="#f8f8a8" stroke-width="1.600"/></g>
<text x="772.300" y="55.500" font-family="Liberation Sans,sans-serif" font-weight="bold" font-size="10.500" fill="#00008c">?</text>
<g><circle cx="806" cy="53.300" r="5.200" fill="#000"/><circle cx="805" cy="52.400" r="5.300" fill="#0010e8"/><path d="M800 51 q1 -4 5.500 -4 q4 0.500 5 4 q-2 1 -3 0 q-1 -2 -2.500 -1 q0.500 2 -1.500 3 q1.500 2 0 4 q-2.500 -0.500 -3.500 -3z" fill="#009400"/><ellipse cx="802.500" cy="51.800" rx="1.300" ry="1.800" fill="#fff"/><path d="M808 56.300 L809.700 58 L814 53.700" fill="none" stroke="#00008c" stroke-width="1.300"/></g>
<text x="204.5" y="87" font-family="Liberation Serif,serif" font-size="14.5" font-weight="bold" font-style="normal" fill="#e8eef6" textLength="11" lengthAdjust="spacingAndGlyphs">F</text><text x="203.5" y="86" font-family="Liberation Serif,serif" font-size="14.5" font-weight="bold" font-style="normal" fill="#000" textLength="11" lengthAdjust="spacingAndGlyphs">F</text>
<text x="228" y="86" font-family="Liberation Serif,serif" font-size="14" font-weight="bold" font-style="italic" fill="#e8eef6" >k</text><text x="227" y="85" font-family="Liberation Serif,serif" font-size="14" font-weight="bold" font-style="italic" fill="#000" >k</text>
<text x="249.5" y="84.5" font-family="Liberation Serif,serif" font-size="12.5" font-weight="bold" font-style="normal" fill="#e8eef6" textLength="10.5" lengthAdjust="spacingAndGlyphs">U</text><text x="248.5" y="83.5" font-family="Liberation Serif,serif" font-size="12.5" font-weight="bold" font-style="normal" fill="#000" textLength="10.5" lengthAdjust="spacingAndGlyphs">U</text>
<rect x="250" y="86" width="10" height="1" fill="#e8eef6"/><rect x="249" y="85" width="10" height="1" fill="#000"/>
<text x="271.5" y="85" font-family="Liberation Sans,sans-serif" font-size="12.5" font-weight="bold" font-style="normal" fill="#e8eef6" >A</text><text x="270.5" y="84" font-family="Liberation Sans,sans-serif" font-size="12.5" font-weight="bold" font-style="normal" fill="#000" >A</text>
<rect x="276" y="80" width="8" height="8" fill="#000"/>
<g shape-rendering="crispEdges">
<rect x="302" y="76" width="12" height="1" fill="#000"/><rect x="302" y="78" width="9" height="1" fill="#000"/><rect x="302" y="80" width="12" height="1" fill="#000"/><rect x="302" y="82" width="9" height="1" fill="#000"/><rect x="302" y="84" width="12" height="1" fill="#000"/>
<rect x="326" y="77" width="12" height="1" fill="#000"/><rect x="329" y="79" width="6" height="1" fill="#000"/><rect x="326" y="81" width="12" height="1" fill="#000"/><rect x="329" y="83" width="6" height="1" fill="#000"/><rect x="326" y="85" width="12" height="1" fill="#000"/>
<rect x="348" y="76" width="12" height="1" fill="#000"/><rect x="351" y="78" width="9" height="1" fill="#000"/><rect x="348" y="80" width="12" height="1" fill="#000"/><rect x="351" y="82" width="9" height="1" fill="#000"/><rect x="348" y="84" width="12" height="1" fill="#000"/>
<rect x="371" y="76" width="12" height="1" fill="#000"/><rect x="371" y="78" width="12" height="1" fill="#000"/><rect x="371" y="80" width="12" height="1" fill="#000"/><rect x="371" y="82" width="12" height="1" fill="#000"/><rect x="371" y="84" width="12" height="1" fill="#000"/>
</g>
<g><rect x="410.500" y="75.500" width="3.500" height="6.500" rx="1.200" fill="#c8b400" stroke="#000"/><path d="M411.500 76.500 v4.500" stroke="#f8f060" stroke-width="1"/><ellipse cx="405" cy="81.300" rx="2.600" ry="1.300" fill="#e8d820" stroke="#000" stroke-width="0.900"/><ellipse cx="409.700" cy="83" rx="2.600" ry="1.300" fill="#e8d820" stroke="#000" stroke-width="0.900"/></g>
<g fill="none" stroke="#000"><ellipse cx="428.300" cy="77.300" rx="2.200" ry="1.900" stroke-width="1.700"/><ellipse cx="434.200" cy="83" rx="2.200" ry="1.900" stroke-width="1.700"/><path d="M426.500 85 L436 75.300" stroke-width="1.700"/></g>
<text x="446.700" y="82" font-family="Liberation Sans,sans-serif" font-size="9.500" font-weight="bold" fill="#000">$</text>
<text x="453.500" y="82" font-family="Liberation Sans,sans-serif" font-size="9" font-weight="bold" fill="#000" textLength="8" lengthAdjust="spacingAndGlyphs">%</text>
<path d="M458 84.500 H451" stroke="#00008c" stroke-width="1.200"/><path d="M449.500 84.500 l3 -2.500 v5z" fill="#00008c"/>
<text x="472" y="80" font-family="Liberation Sans,sans-serif" font-size="6.500" fill="#a09888">0</text>
<path d="M476 75.500 H482.500 V79" fill="none" stroke="#00008c" stroke-width="1.300"/><path d="M480 78 h5 l-2.500 3z" fill="#00008c"/>
<text x="470.500" y="86" font-family="Liberation Sans,sans-serif" font-size="7.500" font-weight="bold" fill="#000" textLength="14" lengthAdjust="spacingAndGlyphs">.000</text>
<text x="493.500" y="80.500" font-family="Liberation Sans,sans-serif" font-size="7.500" font-weight="bold" fill="#000" textLength="10" lengthAdjust="spacingAndGlyphs">.00</text>
<text x="504" y="80.500" font-family="Liberation Sans,sans-serif" font-size="7" fill="#a09888">0</text>
<text x="494.500" y="87" font-family="Liberation Sans,sans-serif" font-size="7.500" font-weight="bold" fill="#000">0</text>
<path d="M506 81 V84.500 H501" fill="none" stroke="#00008c" stroke-width="1.300"/><path d="M499.500 84.500 l3 -2.500 v5z" fill="#00008c"/>
<g shape-rendering="crispEdges"><path d="M530.5 73 V88" stroke="#000" stroke-width="1" stroke-dasharray="2 1"/><rect x="527" y="76" width="12" height="1" fill="#000"/><rect x="531" y="78" width="8" height="2" fill="#000"/><rect x="531" y="81" width="4" height="2" fill="#000"/><rect x="527" y="84" width="12" height="1" fill="#000"/></g><path d="M529.5 80.500 H525" stroke="#00008c" stroke-width="1.300"/><path d="M523 80.500 l3.500 -3 v6z" fill="#00008c"/>
<g shape-rendering="crispEdges"><path d="M553.5 73 V88" stroke="#000" stroke-width="1" stroke-dasharray="2 1"/><rect x="550" y="76" width="12" height="1" fill="#000"/><rect x="554" y="78" width="8" height="2" fill="#000"/><rect x="554" y="81" width="4" height="2" fill="#000"/><rect x="550" y="84" width="12" height="1" fill="#000"/></g><path d="M546 80.500 H550" stroke="#00008c" stroke-width="1.300"/><path d="M552.5 80.500 l-3.500 -3 v6z" fill="#00008c"/>
<rect x="579.500" y="75.500" width="11" height="10" fill="none" stroke="#00008c" stroke-width="1.200"/>
<g shape-rendering="crispEdges"><rect x="601" y="74" width="14" height="4" fill="#00008c"/><path d="M603 75.500h4M609 75.500h4" stroke="#a0a8b8" stroke-width="1"/><rect x="601" y="78" width="5" height="7" fill="#c000c0"/><path d="M602 79l3 5" stroke="#e8a0e8" stroke-width="1"/><rect x="607.500" y="80.500" width="7" height="7" fill="#ffcc99" stroke="#000"/></g>
<g shape-rendering="crispEdges"><rect x="632" y="73" width="1" height="15" fill="#7d7a74"/><rect x="646" y="73" width="1" height="15" fill="#7d7a74"/><rect x="630" y="75" width="18" height="1" fill="#7d7a74"/><rect x="630" y="85" width="18" height="1" fill="#7d7a74"/><rect x="633" y="76" width="13" height="9" fill="#fff"/><rect x="634" y="77" width="3" height="1" fill="#000"/><rect x="634" y="79" width="6" height="1" fill="#000"/></g><path d="M643 79 V84" stroke="#00008c" stroke-width="1.300"/><path d="M643 76.5 l-2.500 3 h5z" fill="#00008c"/>
<g shape-rendering="crispEdges"><rect x="655" y="73" width="1" height="15" fill="#7d7a74"/><rect x="669" y="73" width="1" height="15" fill="#7d7a74"/><rect x="653" y="75" width="18" height="1" fill="#7d7a74"/><rect x="653" y="85" width="18" height="1" fill="#7d7a74"/><rect x="656" y="76" width="13" height="9" fill="#fff"/><rect x="657" y="79" width="3" height="1" fill="#000"/><rect x="657" y="81" width="6" height="1" fill="#000"/></g><path d="M666 79 V82" stroke="#00008c" stroke-width="1.300"/><path d="M666 76.5 l-2.500 2.500 h5z M666 84.5 l-2.500 -2.500 h5z" fill="#00008c"/>
<g shape-rendering="crispEdges"><rect x="679" y="74" width="1" height="15" fill="#7d7a74"/><rect x="693" y="74" width="1" height="15" fill="#7d7a74"/><rect x="677" y="76" width="18" height="1" fill="#7d7a74"/><rect x="677" y="86" width="18" height="1" fill="#7d7a74"/><rect x="680" y="77" width="13" height="9" fill="#fff"/><rect x="681" y="78" width="3" height="1" fill="#000"/><rect x="681" y="80" width="6" height="1" fill="#000"/></g><path d="M690 78 V83" stroke="#00008c" stroke-width="1.300"/><path d="M690 85.5 l-2.500 -3 h5z" fill="#00008c"/>
<g><rect x="155.500" y="105.500" width="12" height="7" rx="1.500" fill="#fff" stroke="#e8eef6"/><rect x="154.500" y="104.500" width="12" height="7" rx="1.500" fill="#fff" stroke="#000" stroke-width="1.300"/><path d="M156 106.500h9.500M156 109.500h4M161 108.500h4.500" stroke="#000" stroke-width="1"/></g>
<text x="180" y="114.5" font-family="Liberation Serif,serif" font-size="15" font-weight="bold" font-style="normal" fill="#e8eef6" textLength="10" lengthAdjust="spacingAndGlyphs">&#931;</text><text x="179" y="113.5" font-family="Liberation Serif,serif" font-size="15" font-weight="bold" font-style="normal" fill="#000" textLength="10" lengthAdjust="spacingAndGlyphs">&#931;</text>
<g shape-rendering="crispEdges"><rect x="203" y="107" width="10" height="1" fill="#e8eef6"/><rect x="203" y="111" width="10" height="1" fill="#e8eef6"/><rect x="202" y="106" width="10" height="1" fill="#000"/><rect x="202" y="110" width="10" height="1" fill="#000"/></g>
<g><circle cx="29.500" cy="136.500" r="3.300" fill="#f8f870" stroke="#000" stroke-width="0.600"/><path d="M22 145 L26.500 139.500 L31.500 145Z" fill="#40d8d8" stroke="#000" stroke-width="0.900"/><rect x="20.500" y="135.500" width="6" height="6" fill="#a02090" stroke="#000" stroke-width="0.900"/><path d="M31 131 v6 l4.500 -3z" fill="#00c000"/></g>
<g shape-rendering="crispEdges"><rect x="20.500" y="155.500" width="12" height="11" fill="#fff" stroke="#000"/><path d="M24.500 155 V167 M28.500 155 V167 M20 159.500 H33 M20 163.500 H33" stroke="#000"/><rect x="23.500" y="158.500" width="6" height="6" fill="#f8f870" stroke="#0000a0" stroke-width="1.400"/></g><path d="M31 153 v6 l4.500 -3z" fill="#00c000"/>
<g><rect x="23" y="178" width="10" height="11" fill="#555"/><rect x="22" y="177" width="10" height="11" fill="#fff"/><path d="M31 175 v6 l4.500 -3z" fill="#00c000"/><text x="19.500" y="186.500" font-family="Liberation Sans,sans-serif" font-size="7.500" font-weight="bold" fill="#00008c" textLength="12" lengthAdjust="spacingAndGlyphs">OLE</text></g>
<g><path d="M20.500 204.500 H29.500 V210.500 H20.500Z" fill="#fff" stroke="#000"/><path d="M23 209.500 L32 201" stroke="#00008c" stroke-width="2.200"/><path d="M24.500 207.200 L31 201.200" stroke="#88a0ff" stroke-width="0.800"/><path d="M21.500 211 l2.500 -0.800 l-1.600 -1.600z" fill="#00008c"/><path d="M31 197 v6 l4.500 -3z" fill="#00c000"/></g>
<g shape-rendering="crispEdges"><rect x="21.500" y="221.500" width="11" height="11" fill="#dfe4ea" stroke="#000"/><path d="M23 224.500h5 M23 226.500h8 M23 228.500h5 M23 230.500h8" stroke="#000"/><rect x="26" y="224" width="5" height="3" fill="#fff" stroke="#000" stroke-width="1"/></g><path d="M31 219 v6 l4.500 -3z" fill="#00c000"/>
<g shape-rendering="crispEdges"><rect x="20.500" y="252.500" width="8" height="10" fill="none" stroke="#50647f"/><path d="M22 254.500h5M22 256.500h5M22 258.500h5M22 260.500h5" stroke="#50647f"/><path d="M21.500 263.500 H29.500 V253" fill="none" stroke="#e3e9f2"/></g><path d="M32.500 249.500 v7 M29 253 h7" stroke="#6c7f99" stroke-width="1"/><path d="M31 251.500 l3 3 M34 251.500 l-3 3" stroke="#6c7f99" stroke-width="0.700"/>
<g><rect x="19.500" y="275.500" width="13" height="10" fill="#fff" stroke="#00008c" stroke-width="1.400"/><path d="M26 276 V285" stroke="#00008c" stroke-width="1.200"/><path d="M21 284.500h4M27.500 284.500h4" stroke="#e8e000" stroke-width="1.500"/><path d="M22 283 q0 -5 3 -6" fill="none" stroke="#0000d0" stroke-width="1.500"/><path d="M27.500 272.500 L33.500 278 L30 282 L25 277Z" fill="#b0b0b0" stroke="#000" stroke-width="0.900"/><path d="M26 278 L29.500 281.500" stroke="#c00000" stroke-width="1.300"/></g>
<text x="19.500" y="300" font-family="Liberation Sans,sans-serif" font-size="7.500" font-weight="bold" fill="#000" textLength="14.500" lengthAdjust="spacingAndGlyphs">ABC</text>
<path d="M20 302 L24 305 L34 299.500" fill="none" stroke="#00008c" stroke-width="1.700"/>
<text x="19.500" y="324" font-family="Liberation Sans,sans-serif" font-size="7.500" font-weight="bold" fill="#000" textLength="14.500" lengthAdjust="spacingAndGlyphs">ABC</text>
<path d="M19.500 327.500 q2 -2.500 4 0 t4 0 t4 0 t3.500 0" fill="none" stroke="#e00000" stroke-width="1.100"/>
<g><path d="M20.500 349.500 V344 L22.500 339.500 H25 L26 343 H28.500 L29.500 339.500 H32 L34 344 V349.500 H28.500 V346 H26 V349.500Z" fill="#000"/><path d="M22 348.500h3M30 348.500h3" stroke="#f0e000" stroke-width="1"/><path d="M23 341v2M31 341v2" stroke="#fff" stroke-width="0.800"/></g>
<g><path d="M20 375.500 H31.500 L27 380 V381.500 H24.500 V380Z" fill="#f0e870" stroke="#000" stroke-width="1"/><path d="M19.500 375 H32" stroke="#000" stroke-width="1.800"/><path d="M32 366.500 v7 M28.500 370 h7" stroke="#9aa0a8" stroke-width="1"/><path d="M30.500 368.500 l3 3 M33.500 368.500 l-3 3" stroke="#9aa0a8" stroke-width="0.700"/></g>
<text x="18.500" y="396" font-family="Liberation Sans,sans-serif" font-size="10.500" font-weight="bold" fill="#00008c">A</text>
<text x="27.500" y="404.500" font-family="Liberation Sans,sans-serif" font-size="10.500" font-weight="bold" fill="#000">Z</text>
<path d="M21.500 398 L25 401.500" stroke="#00008c" stroke-width="1"/><path d="M26 402.500 v-3 l-3 3z" fill="#00008c"/>
<text x="19" y="419" font-family="Liberation Sans,sans-serif" font-size="10.500" font-weight="bold" fill="#00008c">Z</text>
<text x="26.500" y="427.500" font-family="Liberation Sans,sans-serif" font-size="10.500" font-weight="bold" fill="#000">A</text>
<path d="M21.500 421 L25 424.500" stroke="#00008c" stroke-width="1"/><path d="M26 425.500 v-3 l-3 3z" fill="#00008c"/>
<g shape-rendering="crispEdges"><rect x="20.500" y="443.500" width="6" height="3" fill="#fff" stroke="#000"/><rect x="28.500" y="443.500" width="6" height="3" fill="#fff" stroke="#000"/><rect x="20.500" y="448.500" width="8" height="6" fill="#fff" stroke="#000"/><path d="M21 451.500h8" stroke="#000"/></g>
<g shape-rendering="crispEdges"><path d="M20.500 466.500h12M20.500 469.500h12M20.500 472.500h8M20.500 475.500h8" stroke="#50647f"/><path d="M20.500 467.500h12M20.500 470.500h12M20.500 473.500h8M20.500 476.500h8" stroke="#e3e9f2"/><path d="M20.500 466v11M26.500 466v11" stroke="#50647f"/></g><path d="M29 471 l5 6 M34 471 l-5 6" stroke="#50647f" stroke-width="2"/>
<g fill="none"><path d="M21 480.500 v6 M18 483.500 h6" stroke="#8d8d8d" stroke-width="1"/><ellipse cx="26" cy="493.500" rx="3.800" ry="2.400" transform="rotate(-40 26 493.500)" stroke="#000" stroke-width="2.600"/><ellipse cx="26" cy="493.500" rx="3.800" ry="2.400" transform="rotate(-40 26 493.500)" stroke="#fff" stroke-width="0.900"/><ellipse cx="31" cy="489.500" rx="3.800" ry="2.400" transform="rotate(-40 31 489.500)" stroke="#000" stroke-width="2.600"/><ellipse cx="31" cy="489.500" rx="3.800" ry="2.400" transform="rotate(-40 31 489.500)" stroke="#fff" stroke-width="0.900"/></g>
<g><rect x="4.500" y="121.500" width="6" height="2.500" rx="1" fill="#e8e8e8" stroke="#000" stroke-width="0.800"/><rect x="5.500" y="124" width="4" height="5.500" fill="#d8d8d8" stroke="#555" stroke-width="0.600"/><path d="M7 124.500v4.500" stroke="#fff" stroke-width="1.200"/><path d="M3 130.500 H12" stroke="#000" stroke-width="1"/><path d="M3.500 129.800 H11.500" stroke="#c8c8c8" stroke-width="1"/><path d="M7.500 131 V138" stroke="#000" stroke-width="1"/></g>
<path d="M4.500 82.500 V93.500 L10 88Z" fill="#c4cfdd" stroke="#dfe6f0" stroke-width="0.800"/><path d="M4.500 93.500 L10 88" stroke="#50647f" stroke-width="0.900"/>
</svg>
</div>
</body></html>
